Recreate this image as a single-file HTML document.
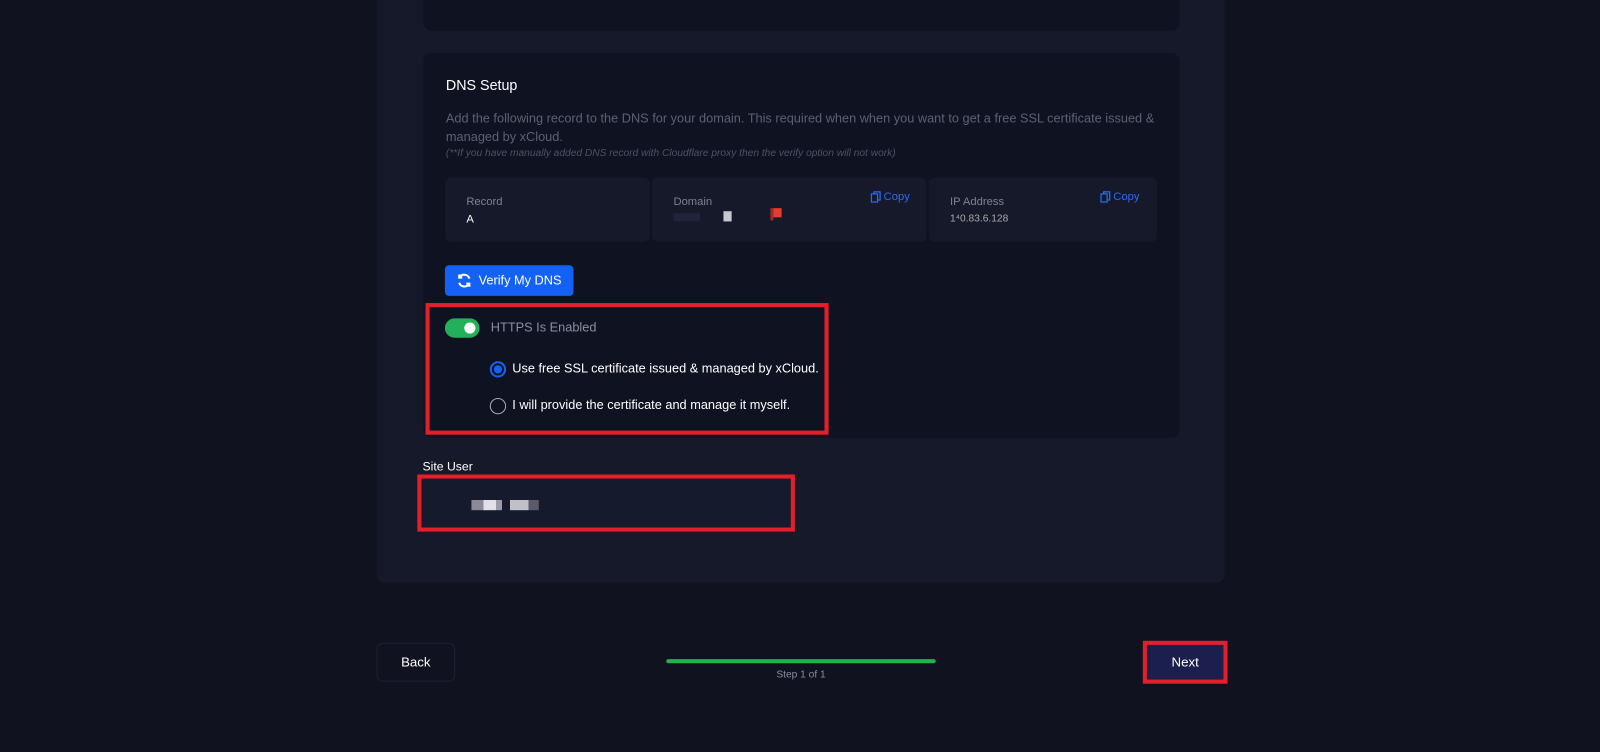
<!DOCTYPE html>
<html><head><meta charset="utf-8"><style>
*{box-sizing:border-box;margin:0;padding:0}
body{width:1600px;height:752px;background:#10121f;font-family:"Liberation Sans",sans-serif;position:relative;overflow:hidden;color:#fff}
#w{position:absolute;left:0;top:0;width:1568px;height:737px;transform:scale(1.0204);transform-origin:0 0}
.abs{position:absolute}
.panel{left:369px;top:0;width:831px;height:571px;background:#151929;border-radius:0 0 8px 8px}
.card{background:#0f1221;border-radius:8px}
.cell{background:#151929;border-radius:6px;position:absolute;top:174px;height:63px}
.lbl{font-size:11px;color:#7d8196;position:absolute;top:18px}
.copy{position:absolute;top:13px;font-size:11px;color:#2a6cf5;display:flex;align-items:center;gap:2px}
.redbox{border:4px solid #e3202a}
</style></head><body><div id="w">
<div class="abs panel"></div>
<div class="abs card" style="left:415px;top:-10px;width:741px;height:40px"></div>
<div class="abs card" style="left:415px;top:52px;width:741px;height:377px"></div>
<div class="abs" style="left:437px;top:75px;font-size:14px">DNS Setup</div>
<div class="abs" style="left:437px;top:107px;font-size:12.5px;color:#5c6075;line-height:18px;width:700px">Add the following record to the DNS for your domain. This required when when you want to get a free SSL certificate issued &amp; managed by xCloud.</div>
<div class="abs" style="left:437px;top:145px;font-size:10px;color:#4e5266;font-style:italic">(**If you have manually added DNS record with Cloudflare proxy then the verify option will not work)</div>
<div class="cell" style="left:436px;width:201px"><div class="lbl" style="left:21px">Record</div><div style="position:absolute;left:21px;top:35px;font-size:11px">A</div></div>
<div class="cell" style="left:639px;width:269px"><div class="lbl" style="left:21px">Domain</div>
<div style="position:absolute;left:21px;top:35px;width:26px;height:8px;background:#20243a"></div>
<div style="position:absolute;left:70px;top:33px;width:8px;height:10px;background:#c8c8d0"></div>
<div style="position:absolute;left:116px;top:30px;width:3px;height:12px;background:#a02a25"></div>
<div style="position:absolute;left:119px;top:30px;width:8px;height:9px;background:#e63b2e"></div>
<div class="copy" style="left:214px"><svg width="11" height="12" viewBox="0 0 11 12" fill="none" stroke="#2a6cf5" stroke-width="1.2"><rect x="1" y="3" width="6" height="8"/><path d="M3.5 3V1h6v8H7"/></svg>Copy</div></div>
<div class="cell" style="left:910px;width:224px"><div class="lbl" style="left:21px">IP Address</div><div style="position:absolute;left:21px;top:35px;font-size:10px;color:#aaa">1⁴0.83.6.128</div><div class="copy" style="left:168px"><svg width="11" height="12" viewBox="0 0 11 12" fill="none" stroke="#2a6cf5" stroke-width="1.2"><rect x="1" y="3" width="6" height="8"/><path d="M3.5 3V1h6v8H7"/></svg>Copy</div></div>
<div class="abs" style="left:436px;top:260px;width:126px;height:30px;background:#1462f5;border-radius:4px;font-size:12.5px;line-height:30px;padding-left:33px">Verify My DNS</div>
<svg class="abs" style="left:447px;top:267px" width="16" height="16" viewBox="0 0 16 16" fill="none" stroke="#fff" stroke-width="2"><path d="M13 6A5.5 5.5 0 0 0 3 5M3 10a5.5 5.5 0 0 0 10 1"/><path d="M3 2v3h3M13 14v-3h-3"/></svg>
<div class="abs redbox" style="left:417px;top:297px;width:395px;height:129px"></div>
<div class="abs" style="left:436px;top:312px;width:34px;height:19px;background:#22b05a;border-radius:10px"><div style="position:absolute;right:4px;top:4px;width:11px;height:11px;background:#fff;border-radius:50%"></div></div>
<div class="abs" style="left:481px;top:314px;font-size:12.5px;color:#8a8ea2">HTTPS Is Enabled</div>
<div class="abs" style="left:480px;top:354px;width:16px;height:16px;border:2px solid #1462f5;border-radius:50%"><div style="margin:2px;width:8px;height:8px;background:#1462f5;border-radius:50%"></div></div>
<div class="abs" style="left:502px;top:354px;font-size:12.5px">Use free SSL certificate issued &amp; managed by xCloud.</div>
<div class="abs" style="left:480px;top:390px;width:16px;height:16px;border:1.5px solid #aaa;border-radius:50%"></div>
<div class="abs" style="left:502px;top:390px;font-size:12.5px">I will provide the certificate and manage it myself.</div>
<div class="abs" style="left:414px;top:450px;font-size:12px">Site User</div>
<div class="abs redbox" style="left:409px;top:465px;width:370px;height:56px;background:#161a2d"></div>
<div class="abs" style="left:462px;top:490px;width:66px;height:10px;background:linear-gradient(90deg,#8a8a98 0 12px,#e0e0e6 12px 24px,#9a9aa8 24px 30px,#171a2c 30px 38px,#c0c0c8 38px 56px,#5a5a6a 56px)"></div>
<div class="abs" style="left:369px;top:630px;width:77px;height:38px;border:1px solid #1d2136;border-radius:6px;font-size:13px;line-height:36px;text-align:center">Back</div>
<div class="abs" style="left:653px;top:646px;width:264px;height:4px;background:#22b14c;border-radius:2px"></div>
<div class="abs" style="left:653px;top:656px;width:264px;text-align:center;font-size:10px;color:#8a8ea2">Step 1 of 1</div>
<div class="abs redbox" style="left:1120px;top:628px;width:83px;height:42px;background:#1c1f4d;font-size:13px;line-height:34px;text-align:center">Next</div>
</div></body></html>
